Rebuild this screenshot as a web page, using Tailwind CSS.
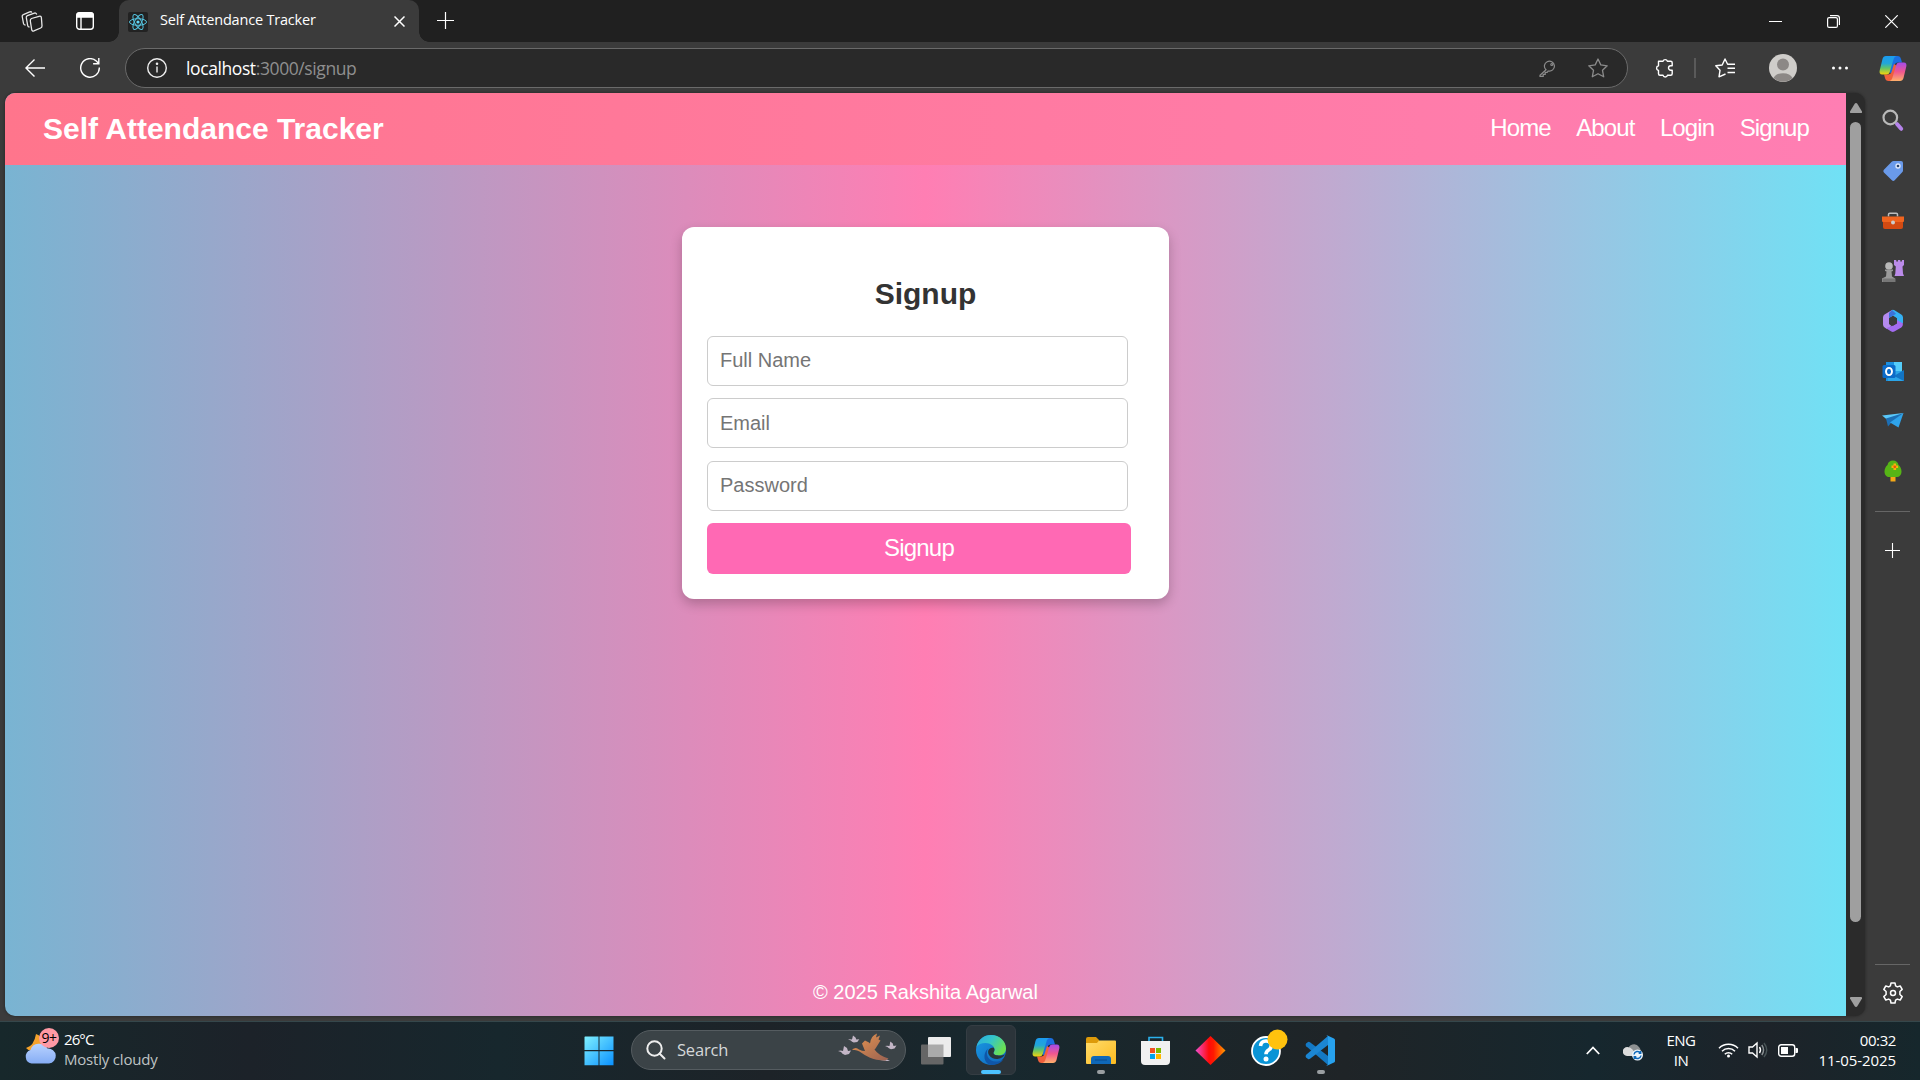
<!DOCTYPE html>
<html lang="en">
<head>
<meta charset="utf-8">
<title>Self Attendance Tracker</title>
<script src="https://cdn.jsdelivr.net/npm/@tailwindcss/browser@4"></script>
</head>
<body class="w-[1920px] h-[1080px] overflow-hidden bg-[#3b3b3b] flex flex-col font-['Open_Sans','Noto_Sans',sans-serif] text-white">
<svg class="absolute w-0 h-0">
  <defs>
    <linearGradient id="cpA" x1="0" y1="0" x2="0" y2="1"><stop offset="0" stop-color="#1b9bf0"/><stop offset=".4" stop-color="#22a6d8"/><stop offset=".65" stop-color="#5fc46a"/><stop offset="1" stop-color="#f5d30b"/></linearGradient>
    <linearGradient id="cpB" x1="0" y1="0" x2="0" y2="1"><stop offset="0" stop-color="#a34bea"/><stop offset=".5" stop-color="#f0568f"/><stop offset="1" stop-color="#ffb06a"/></linearGradient>
    <linearGradient id="edA" x1="0" y1="0" x2="1" y2=".5"><stop offset="0" stop-color="#2aa9e0"/><stop offset=".5" stop-color="#35c5c9"/><stop offset="1" stop-color="#6be052"/></linearGradient>
    <linearGradient id="edB" x1="0" y1="0" x2="1" y2="1"><stop offset="0" stop-color="#1a9be6"/><stop offset="1" stop-color="#0f63b8"/></linearGradient>
    <linearGradient id="fold" x1="0" y1="0" x2="1" y2="1"><stop offset="0" stop-color="#ffdb6b"/><stop offset="1" stop-color="#fdbb1f"/></linearGradient>
    <linearGradient id="dia"><stop offset="0" stop-color="#f04fd0"/><stop offset=".45" stop-color="#ff0a0a"/><stop offset=".6" stop-color="#ff1a00"/><stop offset="1" stop-color="#ff9a00"/></linearGradient>
    <linearGradient id="win" x1="0" y1="0" x2="1" y2="1"><stop offset="0" stop-color="#7ff0ff"/><stop offset="1" stop-color="#0a91ff"/></linearGradient>
    <linearGradient id="cld" x1="0" y1="0" x2="0" y2="1"><stop offset="0" stop-color="#b9d3ff"/><stop offset="1" stop-color="#86adf5"/></linearGradient>
    <linearGradient id="bird" x1="0" y1="0" x2="1" y2="1"><stop offset="0" stop-color="#e8954f"/><stop offset="1" stop-color="#9a6252"/></linearGradient>
    <symbol id="copilot" viewBox="0 0 28 27">
      <path fill="#1b6fe0" d="M15 1h3.500c2 0 3 1 3.500 3l1 3.500h-4c-2 0-3 1-3.500 2.500L13 19l-3-2z"/>
      <path fill="#f0603c" d="M13 26H9.500c-2 0-3-1-3.500-3l-1-3.500h4c2 0 3-1 3.500-2.500L15 9l3 2z"/>
      <path fill="url(#cpA)" d="M7 1h10.500c-1.500.3-2.300 1.500-2.800 3l-4 13c-.6 1.800-1.700 2.500-3.200 2.500H3.200C.8 19.500.2 17.500.7 15.500L3.500 4C4 2.200 5.200 1 7 1z"/>
      <path fill="url(#cpB)" d="M21 26H10.500c1.500-.3 2.300-1.500 2.800-3l4-13c.6-1.800 1.700-2.500 3.200-2.500h4.300c2.400 0 3 2 2.500 4L24.500 23c-.5 1.800-1.700 3-3.500 3z"/>
    </symbol>
  </defs>
</svg>

<!-- tab strip -->
<header class="h-[42px] shrink-0 flex bg-[#202020]">
  <div class="w-[119px] flex items-center rounded-br-xl pl-5">
    <svg class="w-6 h-6" viewBox="0 0 24 24" fill="none" stroke="#e8e8e8" stroke-width="1.300" stroke-linejoin="round"><path d="M11.500 9.500 19 7.300q2.200-.5 2.400 1.500l.6 8q.1 1.600-1.300 2.200l-6.800 2.900q-1.900.6-2.200-1.300l-1.400-8.600q-.2-1.800 1.200-2.500z"/><path d="M9.500 18q-1.500 0-1.800-1.400L6.300 8.700q-.2-1.500 1.100-2l7-2.600q1.800-.5 2.300 1.400"/><path d="M5.500 16q-1.700.1-2-1.500l-1.300-7q-.2-1.400 1.100-1.900l6.500-2.700q1.600-.5 2 .7"/></svg>
    <svg class="ml-8 w-[18px] h-[18px]" viewBox="0 0 18 18" fill="none" stroke="#fff" stroke-width="1.400"><rect x=".7" y=".7" width="16.600" height="16.600" rx="2.800"/><path d="M1 2.500Q1 1 3 1h12q2 0 2 1.500V5H1z" fill="#fff"/><path d="M5 5v12.500"/></svg>
  </div>
  <div class="w-[300px] h-[42px] bg-[#3b3b3b] rounded-t-[10px] flex items-center relative">
    <div class="absolute -left-2.5 bottom-0 w-2.5 h-2.5 bg-[radial-gradient(circle_at_0_0,#202020_9.500px,#3b3b3b_10px)]"></div>
    <div class="absolute -right-2.5 bottom-0 w-2.5 h-2.5 bg-[radial-gradient(circle_at_100%_0,#202020_9.500px,#3b3b3b_10px)]"></div>
    <svg class="ml-[9px] mt-0.5 w-5 h-5" viewBox="0 0 20 20" fill="none" stroke="#55c4e0" stroke-width="1"><rect width="20" height="20" rx="2" fill="#222" stroke="none"/><ellipse cx="10" cy="10" rx="8.500" ry="3.300"/><ellipse cx="10" cy="10" rx="8.500" ry="3.300" transform="rotate(60 10 10)"/><ellipse cx="10" cy="10" rx="8.500" ry="3.300" transform="rotate(120 10 10)"/><circle cx="10" cy="10" r="1.600" fill="#61dafb" stroke="none"/></svg>
    <span class="ml-[12px] mb-0.5 w-[234px] text-[14.500px] tracking-[-0.200px] whitespace-nowrap">Self Attendance Tracker</span>
    <svg class="absolute left-[275px] top-4 w-[11px] h-[11px]" viewBox="0 0 11 11" stroke="#fff" stroke-width="1.500"><path d="M.5.500l10 10M10.500.500l-10 10"/></svg>
  </div>
  <svg class="ml-[18px] mt-3 w-[17px] h-[17px]" viewBox="0 0 17 17" stroke="#fff" stroke-width="1.200"><path d="M8.500 0v17M0 8.500h17"/></svg>
  <div class="ml-auto flex items-center gap-[45px] pr-[22px]">
    <div class="w-[13px] h-px bg-white"></div>
    <svg class="w-[13px] h-[13px]" viewBox="0 0 13 13" fill="none" stroke="#fff" stroke-width="1.200"><rect x=".6" y="2.600" width="9.800" height="9.800" rx="1.500"/><path d="M3 .6h7q2.400 0 2.400 2.400v7"/></svg>
    <svg class="w-[13px] h-[13px]" viewBox="0 0 13 13" stroke="#fff" stroke-width="1.200"><path d="M.3.300l12.400 12.400M12.700.300.300 12.700"/></svg>
  </div>
</header>

<!-- address bar -->
<div class="h-[51px] shrink-0 flex items-center pl-[25px] pt-px">
  <svg class="w-5 h-[18px]" viewBox="0 0 20 18" fill="none" stroke="#fff" stroke-width="1.400"><path d="M20 9H1M9.500.5.900 9l8.600 8.500"/></svg>
  <svg class="ml-[35px] w-5 h-5" viewBox="0 0 20 20" fill="none" stroke="#fff" stroke-width="1.400"><path d="M19.300 9.500a9.300 9.300 0 1 1-3-6.400l2.400 2.400M18.800 0v5.700h-5.700"/></svg>
  <div class="ml-[25px] w-[1503px] h-10 rounded-full border border-[#6a6a6a] bg-[#292929] flex items-center pl-[21px]">
    <svg class="w-5 h-5" viewBox="0 0 20 20" fill="none" stroke="#eee" stroke-width="1.400"><circle cx="10" cy="10" r="9.300"/><path d="M10 8.500v6"/><circle cx="10" cy="5.800" r=".6" fill="#eee"/></svg>
    <span class="ml-[19px] text-[17.500px] tracking-[-0.400px] text-[#8f8f8f] whitespace-nowrap"><span class="text-white">localhost</span>:3000/signup</span>
    <svg class="ml-auto w-[18px] h-[17px]" viewBox="0 0 18 17" fill="none" stroke="#8b8b8b" stroke-width="1.200"><path d="M7 9.800 1 15.300v1h3.200v-2h2v-2h2l1-1.300a5 5 0 1 0-2.200-1.200z"/><circle cx="12.800" cy="4.500" r="1"/></svg>
    <svg class="ml-[31px] mr-[19px] w-5 h-5" viewBox="0 0 20 20" fill="none" stroke="#8b8b8b" stroke-width="1.300" stroke-linejoin="round"><path d="m10 1 2.800 5.900 6.400.9-4.700 4.500 1.200 6.500L10 15.700l-5.700 3.100 1.200-6.500L.8 7.800l6.400-.9z"/></svg>
  </div>
  <svg class="ml-[27px] w-[19px] h-5" viewBox="0 0 19 20" fill="none" stroke="#fff" stroke-width="1.400" stroke-linejoin="round"><path d="M3.500 3.300H8a2.300 2.300 0 0 1 4.400 0h3.300q1.500 0 1.500 1.500v3h-1.500a2.200 2.200 0 0 0 0 4.400h1.500v3.500q0 1.500-1.500 1.500h-3.200a2.300 2.300 0 0 1-4.500 0H5q-1.500 0-1.500-1.500v-3.200a2.400 2.400 0 0 1 0-4.700z"/></svg>
  <div class="ml-[20px] w-0.5 h-5 bg-[#5a5a5a]"></div>
  <svg class="ml-[19px] w-5 h-5" viewBox="0 0 20 20" fill="none" stroke="#fff" stroke-width="1.400" stroke-linejoin="round"><path d="M10.500 16 4 18.800l1-6.500L.8 7.800 7.200 7 10 1l2.600 5.300H20M12.500 10.300H20M12.500 14.500H20" /></svg>
  <svg class="ml-[34px] w-7 h-7" viewBox="0 0 28 28"><circle cx="14" cy="14" r="14" fill="#cfcdca"/><circle cx="14" cy="10.500" r="6" fill="#8c8886"/><path d="M4.500 24a10 7 0 0 1 19 0 14 14 0 0 1-19 0z" fill="#8c8886"/></svg>
  <svg class="ml-[35px] w-4 h-1" viewBox="0 0 16 4" fill="#fff"><circle cx="1.500" cy="2" r="1.500"/><circle cx="8" cy="2" r="1.500"/><circle cx="14.500" cy="2" r="1.500"/></svg>
  <svg class="ml-[31px] w-7 h-[27px]"><use href="#copilot"/></svg>
</div>

<!-- page and side bar -->
<div class="h-[928px] shrink-0 flex pl-[5px]">
  <div class="w-[1860px] h-[923px] rounded-[10px] overflow-hidden flex bg-[#2b2b2b] shadow-[0_0_3px_#222]">
    <main class="w-[1841px] flex flex-col font-['Liberation_Sans',Arial,sans-serif] bg-[linear-gradient(to_right,#79b4d2,#ff7eb3,#70e1f5)]">
      <nav class="h-[72px] shrink-0 flex items-center justify-between pl-[38px] pr-[37px] bg-[linear-gradient(to_right,#ff758c,#ff7eb3)]">
        <h1 class="text-[30px] font-bold leading-none mt-[-1px]">Self Attendance Tracker</h1>
        <div class="flex gap-[25.500px] text-[24px] tracking-[-0.900px] leading-none mt-[-2px]"><a>Home</a><a>About</a><a>Login</a><a>Signup</a></div>
      </nav>
      <section class="ml-[677px] mt-[62px] w-[487px] h-[372px] bg-white rounded-xl shadow-[0_5px_12px_rgba(0,0,0,0.22)] px-[25px] flex flex-col">
        <h2 class="mt-[52px] h-[30px] mb-[27px] text-center text-[30px] leading-[30px] font-bold text-[#333]">Signup</h2>
        <div class="flex flex-col w-[421px] text-[20px] text-[#757575]">
          <div class="h-[50px] border border-[#ccc] rounded-md px-3 leading-[46px]">Full Name</div>
          <div class="mt-3 h-[50px] border border-[#ccc] rounded-md px-3 leading-[48px]">Email</div>
          <div class="mt-[13px] h-[50px] border border-[#ccc] rounded-md px-3 leading-[46px]">Password</div>
        </div>
        <button class="mt-3 w-[424px] h-[51px] shrink-0 rounded-md bg-[#ff69b4] text-[24px] tracking-[-0.800px] leading-[49px] pb-0.5">Signup</button>
      </section>
      <footer class="mt-auto mb-3 text-center text-[20px] leading-6">© 2025 Rakshita Agarwal</footer>
    </main>
    <div class="w-[19px] flex flex-col items-center pt-2.5 pb-[9px]">
      <svg class="w-3 h-2.5 shrink-0" viewBox="0 0 12 10" fill="#9f9f9f"><path d="M6 0q.8 0 1.300.8L12 8.500q.3 1.500-1 1.500H1Q-.3 10 0 8.500L4.700.8Q5.200 0 6 0z"/></svg>
      <div class="mt-[9px] w-[11px] h-[800px] shrink-0 rounded-full bg-[#9f9f9f]"></div>
      <svg class="mt-auto w-3 h-2.5 shrink-0 rotate-180" viewBox="0 0 12 10" fill="#9f9f9f"><path d="M6 0q.8 0 1.300.8L12 8.500q.3 1.500-1 1.500H1Q-.3 10 0 8.500L4.700.8Q5.200 0 6 0z"/></svg>
    </div>
  </div>
  <aside class="w-[55px] flex flex-col items-center pt-[15px]">
    <div class="flex flex-col gap-[26px] items-center">
      <svg class="w-6 h-6 mb-px" viewBox="0 0 24 24" fill="none"><path d="m16 16 4.200 4.800" stroke="#b583ea" stroke-width="4" stroke-linecap="round"/><circle cx="9.300" cy="9.500" r="6.800" stroke="#b9b9b9" stroke-width="2.200"/></svg>
      <svg class="w-6 h-6" viewBox="0 0 24 24"><path fill="#6a9aea" d="M12.500 2H20q2 0 2 2v7.500q0 1-.8 1.800l-7.500 8q-1.400 1.300-2.800 0l-8-7.800q-1.300-1.400 0-2.700l7.800-8Q11.500 2 12.500 2z"/><circle cx="17" cy="7" r="2.700" fill="#dfe9fb"/><circle cx="17" cy="7" r="1.300" fill="#29436e"/></svg>
      <svg class="w-6 h-6" viewBox="0 0 24 24"><path fill="none" stroke="#bdbdbd" stroke-width="1.500" d="M7.500 7.500V5.500q0-1.300 1.300-1.300h6.400q1.300 0 1.300 1.300v2"/><path fill="#d34a12" d="M2 12h20v6q0 2-2 2H4q-2 0-2-2z"/><path fill="#f0641f" d="M1 7.500h22V12q0 1-1 1H2q-1 0-1-1z"/><circle cx="12" cy="13.500" r="2" fill="#ccc"/></svg>
      <svg class="w-6 h-6" viewBox="0 0 24 24"><path fill="#bb8bea" d="M13 1h2.300v1.500h1.600V1h2.400v1.500h1.600V1H23v5l-1.500 1.500.5 7 1 2.500h-9.500l.8-2.500.5-7L13 6z"/><circle cx="8" cy="7" r="3.800" fill="#b8b8b8"/><path fill="#9a9a9a" d="M4 10.500h8V12l-1.500.5.500 5 3 2V23H1v-3.500l4-2 .5-5L4 12z"/><path fill="#777" d="M1.500 19.500h13V23h-13z"/></svg>
      <svg class="w-6 h-6" viewBox="0 0 24 24"><path fill="#b58af0" d="M11 1 3.500 5.500Q2 6.500 2 8.500v7q0 2 1.600 3L6 20l4.500-3L8 15V9l7-4.500z"/><path fill="#35b1f3" d="m11 1-3 8 4-2.200 4 2.500v5h6V8.500q0-2-1.700-3L13.500 1.300Q12.300.500 11 1z"/><path fill="#3c72d8" d="M11 1 8 4v5l4-2.200 3-2z"/><path fill="#a36cf0" d="m5 19.300 7-2.800 4-2.500v-3l6 3.500q0 3-1.700 4l-7 4q-1.500.8-3 0z"/><path fill="#3b3b3b" d="m8 9.200 4-2.300 4 2.500v5L12 16.800l-4-2.400z"/></svg>
      <svg class="w-6 h-6" viewBox="0 0 24 24"><path fill="#1b8fdf" d="M5 3h16v19H5z"/><path fill="#55cdfa" d="M13 3h8v9h-8z"/><path fill="#2ba5e8" d="M6 12h17v10H7z"/><path fill="#1274c4" d="m13 17 10-6v11z"/><rect x="1.500" y="6" width="13" height="13" rx="1.500" fill="#0c6bc8"/><ellipse cx="8" cy="12.500" rx="3" ry="3.600" fill="none" stroke="#fff" stroke-width="1.900"/></svg>
      <svg class="w-6 h-6" viewBox="0 0 24 24"><path fill="#5ac8fa" d="M1 6.500 22.500 4 9 13z"/><path fill="#1c6fb5" d="m5 9.500 2 8 3-3.500L22.500 4z"/><path fill="#2fa3ea" d="M22.500 4 17.500 18.500 9 13.500z"/></svg>
      <svg class="w-6 h-6" viewBox="0 0 24 24"><path fill="#f5a817" d="M9.500 15h5v7.500h-5z"/><path fill="#56b516" d="M12 1.500c3 0 5 1.500 5.500 4.500 2 1.500 3 4 3 6.500 0 3.500-2 5.500-5 5.500h-7c-3 0-5-2-5-5.500 0-2.500 1-5 3-6.500C7 3 9 1.500 12 1.500z"/><path fill="#f9b20c" d="M12.500 4.500h2.600v2h2v2.600h-2v2h-2.600v-2h-2V6.500h2z"/><circle cx="13.800" cy="7.800" r="1.400" fill="#e8550d"/></svg>
    </div>
    <div class="mt-[28px] w-[35px] h-px bg-[#666] shrink-0"></div>
    <svg class="mt-[31px] w-[15px] h-[15px] shrink-0" viewBox="0 0 15 15" stroke="#fff" stroke-width="1.100"><path d="M7.500 0v15M0 7.500h15"/></svg>
    <div class="mt-auto w-[35px] h-px bg-[#666] shrink-0"></div>
    <svg class="mt-[17px] mb-[17px] w-[22px] h-[22px] shrink-0" viewBox="0 0 22 22" fill="none" stroke="#fff" stroke-width="1.500" stroke-linejoin="round"><path d="M9 1h4l.6 2.900 1.700 1 2.900-.9 2 3.400-2.300 2.100v3l2.300 2.100-2 3.400-2.900-.9-1.700 1L13 21H9l-.6-2.900-1.700-1-2.900.9-2-3.400 2.300-2.100v-3L1.800 7.400l2-3.400 2.900.9 1.700-1z"/><circle cx="11" cy="11" r="2.500"/></svg>
  </aside>
</div>

<!-- taskbar -->
<footer class="h-[59px] shrink-0 border-t border-[#35474b] bg-[linear-gradient(to_right,#17282b_0%,#1c2229_13%,#17272d_26%,#1d2328_40%,#17282e_52%,#1f2427_70%,#16272e_83%,#1d2329_92%,#16272c_100%)] flex text-[15px]">
  <div class="w-[584px] flex pl-6 pt-[6px]">
    <div class="relative w-9 h-10">
      <svg class="w-9 h-10" viewBox="0 0 36 40"><path fill="#f5a22b" d="M2 20q8-2 10-14 6 2 7 8L12 22Q5 24 2 20z"/><path fill="url(#cld)" d="M7.500 35.500a7 7 0 0 1-1-13.500 9 8 0 0 1 17-1.500 7.500 7.500 0 0 1 1.500 15z"/></svg>
      <span class="absolute left-[15px] top-0 w-5 h-5 rounded-full bg-[#ff99a4] text-black text-[14px] leading-5 text-center tracking-[-0.5px]">9+</span>
    </div>
    <div class="ml-1 mt-px text-[15px] leading-5 tracking-[-0.2px] whitespace-nowrap"><div class="tracking-[-0.9px]">26°C</div><div class="text-[#bfc3c4]">Mostly cloudy</div></div>
  </div>
  <svg class="mt-[14px] w-[30px] h-[30px]" viewBox="0 0 30 30" fill="url(#win)"><path d="M1 .5h13.500V14H.5V1zM15.500.500H29.500V14h-14zM.5 15.200h14v14H.5zM15.500 15.200h14v14h-14z"/></svg>
  <div class="ml-[17px] mt-2 w-[275px] h-10 rounded-full bg-[#3b4347] border border-[#555c60] flex items-center pl-3.5">
    <svg class="w-5 h-5" viewBox="0 0 20 20" fill="none" stroke="#eee" stroke-width="2"><circle cx="8.500" cy="8.500" r="7.200"/><path d="m13.500 13.500 5 5" stroke-linecap="round"/></svg>
    <span class="ml-[11px] text-[16.500px] tracking-[-0.2px] text-[#d5d8d9]">Search</span>
    <svg class="ml-auto mr-[7px] w-[60px] h-[34px]" viewBox="0 0 60 34"><g fill="#c3b6c6"><path d="M0 18q3-1 5 0l1-5 3 2 1 3 3-.5-2 3.500-4 1q-3-1-4-3zM10 6.500q2-.5 4 0l1-4 2.500 2 .8 2 3-.3-2 2.800-3.500.5q-2-.5-3-2zM47 13q2-.7 4.500 0l.8-4.500 2.500 2 .7 2.500 3-.5-2 3-3.500.8q-2.500-.8-3.500-2.300zM40 25l4-1 8 4h-3l-7-1z"/></g><path fill="url(#bird)" d="M14 16.500q4-3 7 0 3 1.500 6 1.500l-3-7.500 3-3 4 2 1 1q1-8 7-10l-1 4 4-2-1.500 4 2 1-5 8-1 1q4 6 14 9l-3 2q-10 0-16-3t-10-6q-3-2-6-1.500z"/></svg>
  </div>
  <svg class="ml-[14px] mt-[14px] w-8 h-[30px]" viewBox="0 0 32 30"><rect x="1" y="8.500" width="22.500" height="20" rx="1" fill="#666"/><rect x="8" y="1" width="23" height="20" rx="1" fill="#ececec"/><path d="M8 8.500h15.500V21H8z" fill="#aaa"/></svg>
  <div class="ml-[14px] mt-[3px] w-[50px] h-[50px] rounded-md bg-[#2b343a] border border-[#353d43] flex flex-col items-center pt-[9px]">
    <svg class="w-[30px] h-[30px] shrink-0" viewBox="0 0 30 30"><circle cx="15" cy="15" r="15" fill="url(#edB)"/><path fill="url(#edA)" d="M.5 12C2 4.500 8 0 15 0c8.500 0 15 6 15 13.500 0 4.500-3.500 7-7.500 7-3 0-5-1-5-2.500 0-1 1-1.500 1-3.500 0-3.500-4-6.500-9-6.500-4 0-7.500 1.500-9 4z"/><path fill="#0f56a8" d="M12 13.500c-3 5 0 13 8 13 3 0 5-.7 7-1.800-2 3.300-7 5.300-12 5.300-7-1-9-11-3-16.500z"/><path fill="#29343a" d="M17.500 12.500c-5 0-6.500 4-4.500 7.500 2 3.300 6 4.500 9.500 3.800 3-.6 5-2 6.500-4.300-3 1.500-11.500 1.500-11.500-1.500 0-1 1-1.500 1-3.500 0-.8-.4-1.500-1-2z"/></svg>
    <div class="mt-[5px] w-5 h-1 rounded-full bg-[#4cc2ff] shrink-0"></div>
  </div>
  <svg class="ml-4 mt-[15px] w-7 h-[27px]"><use href="#copilot"/></svg>
  <div class="ml-[25px] mt-[14px] w-[32px] flex flex-col items-center">
    <svg class="w-[30px] h-[29px]" viewBox="0 0 30 29"><path fill="#dd9a0a" d="M0 3q0-2 2-2h8l3 3v5H0z"/><path fill="url(#fold)" d="M0 7h11l2-2.500h16q1 0 1 1V27q0 1-1 1H1q-1 0-1-1z"/><path fill="#0f68b8" d="M5 28v-5q0-3 3-3h14q3 0 3 3v5z"/><path stroke="#0a4a8c" d="M9 24h12"/></svg>
    <div class="mt-[5px] w-2 h-1 rounded-full bg-[#9a9fa2]"></div>
  </div>
  <svg class="ml-[23px] mt-[14px] w-[31px] h-[30px]" viewBox="0 0 31 30"><path d="M9 7V1.500h13.500V7" fill="none" stroke="#2bb1ec" stroke-width="1.600"/><path fill="#f1f1f1" d="M1 5h29v20q0 4-4 4H5q-4 0-4-4z"/><path fill="#f25022" d="M10 12h5v5h-5z"/><path fill="#7fba00" d="M16 12h5v5h-5z"/><path fill="#00a4ef" d="M10 18h5v5h-5z"/><path fill="#ffb900" d="M16 18h5v5h-5z"/></svg>
  <svg class="ml-6 mt-[13px] w-[31px] h-[31px]" viewBox="0 0 31 31"><path fill="url(#dia)" d="m15.500 1 15 14.500-15 14.500-15-14.500z"/></svg>
  <svg class="ml-[25px] mt-[7px] w-[37px] h-[38px]" viewBox="0 0 37 38"><circle cx="15" cy="22" r="14" fill="#0a94d6" stroke="#fff" stroke-width="1.800"/><path d="M9.500 17q.5-5 5.500-5t5.300 4.500q0 3-3 4.800-2.300 1.500-2.300 4" fill="none" stroke="#fff" stroke-width="3.600"/><circle cx="15" cy="30" r="2.500" fill="#fff"/><circle cx="26.500" cy="10.500" r="10" fill="#ffc20e"/></svg>
  <div class="ml-[17px] mt-[13px] w-[31px] flex flex-col items-center">
    <svg class="w-[31px] h-[31px]" viewBox="0 0 31 31"><path fill="#1479c4" d="M1 8.500 3 7q1-.5 2 .2L23 21v9L1.200 11.200Q0 10 1 8.500z"/><path fill="#1b86d3" d="M1 22.500 3 24q1 .5 2-.2L23 10V1L1.200 19.800Q0 21 1 22.500z"/><path fill="#27a1ee" d="M22.500.5 29 3.500q1 .5 1 1.500v21q0 1-1 1.500l-6.500 3q-1 .3-1.800-.6 2.300 1 2.300-1.400v-26q0-2.400-2.300-1.400.800-.9 1.800-.6z"/></svg>
    <div class="mt-[4px] w-2 h-1 rounded-full bg-[#9a9fa2]"></div>
  </div>
  <div class="ml-auto flex pr-6">
    <svg class="mt-[24px] w-[14px] h-[9px]" viewBox="0 0 14 9" fill="none" stroke="#fff" stroke-width="1.800"><path d="m.8 8 6.200-6.500L13.200 8"/></svg>
    <svg class="ml-[23px] mt-[20px] w-[20px] h-5" viewBox="0 0 20 20"><path fill="#8e9192" d="M5 8a6 6 0 0 1 11-3q3 3 1 8H8z"/><path fill="#dcdcdc" d="M4 14a4.500 4.500 0 0 1 .5-9q3 0 5 2.500l4 6.500z"/><circle cx="14.500" cy="13" r="5.500" fill="#eef5fb"/><path fill="none" stroke="#0f68b8" stroke-width="1.500" d="M11 12.500a3.600 3.600 0 0 1 6.500-1.500M18 13.500a3.600 3.600 0 0 1-6.500 1.500M17.700 9v2.200h-2M11.300 17v-2.200h2"/></svg>
    <div class="ml-[22px] mt-2 w-[32px] text-center text-[15px] leading-5 tracking-[-0.500px]">ENG<br>IN</div>
    <svg class="ml-[21px] mt-[20px] w-[21px] h-4" viewBox="0 0 21 16" fill="none" stroke="#fff" stroke-width="1.500"><path d="M1 6.200a13.500 13.500 0 0 1 19 0M4 9.300a9.200 9.200 0 0 1 13 0M6.800 12.200a5.200 5.200 0 0 1 7.400 0"/><circle cx="10.500" cy="14" r="1.500" fill="#fff" stroke="none"/></svg>
    <svg class="ml-[9px] mt-[19px] w-[21px] h-[18px]" viewBox="0 0 21 18" fill="none" stroke="#fff" stroke-width="1.400"><path d="M1 6h3.500L9 2v14l-4.500-4H1zM11.500 6q2 3 0 6"/><path stroke="#8b9194" d="M13.800 4q3.500 5 0 10"/><path stroke="#495457" d="M16 2q5.500 7 0 14"/></svg>
    <svg class="ml-[9px] mt-[22px] w-5 h-[13px]" viewBox="0 0 20 13" fill="none" stroke="#fff" stroke-width="1.400"><rect x=".7" y=".7" width="16" height="11.600" rx="2.500"/><path fill="#fff" stroke="none" d="M3 3h7v7H3zM17.500 4H19q1 0 1 1v3q0 1-1 1h-1.500z"/></svg>
    <div class="ml-[20px] mt-2 w-[78px] text-right text-[15px] leading-5 tracking-[-0.080px] whitespace-nowrap"><div class="tracking-[-0.400px]">00:32</div>11-05-2025</div>
  </div>
</footer>
</body>
</html>
